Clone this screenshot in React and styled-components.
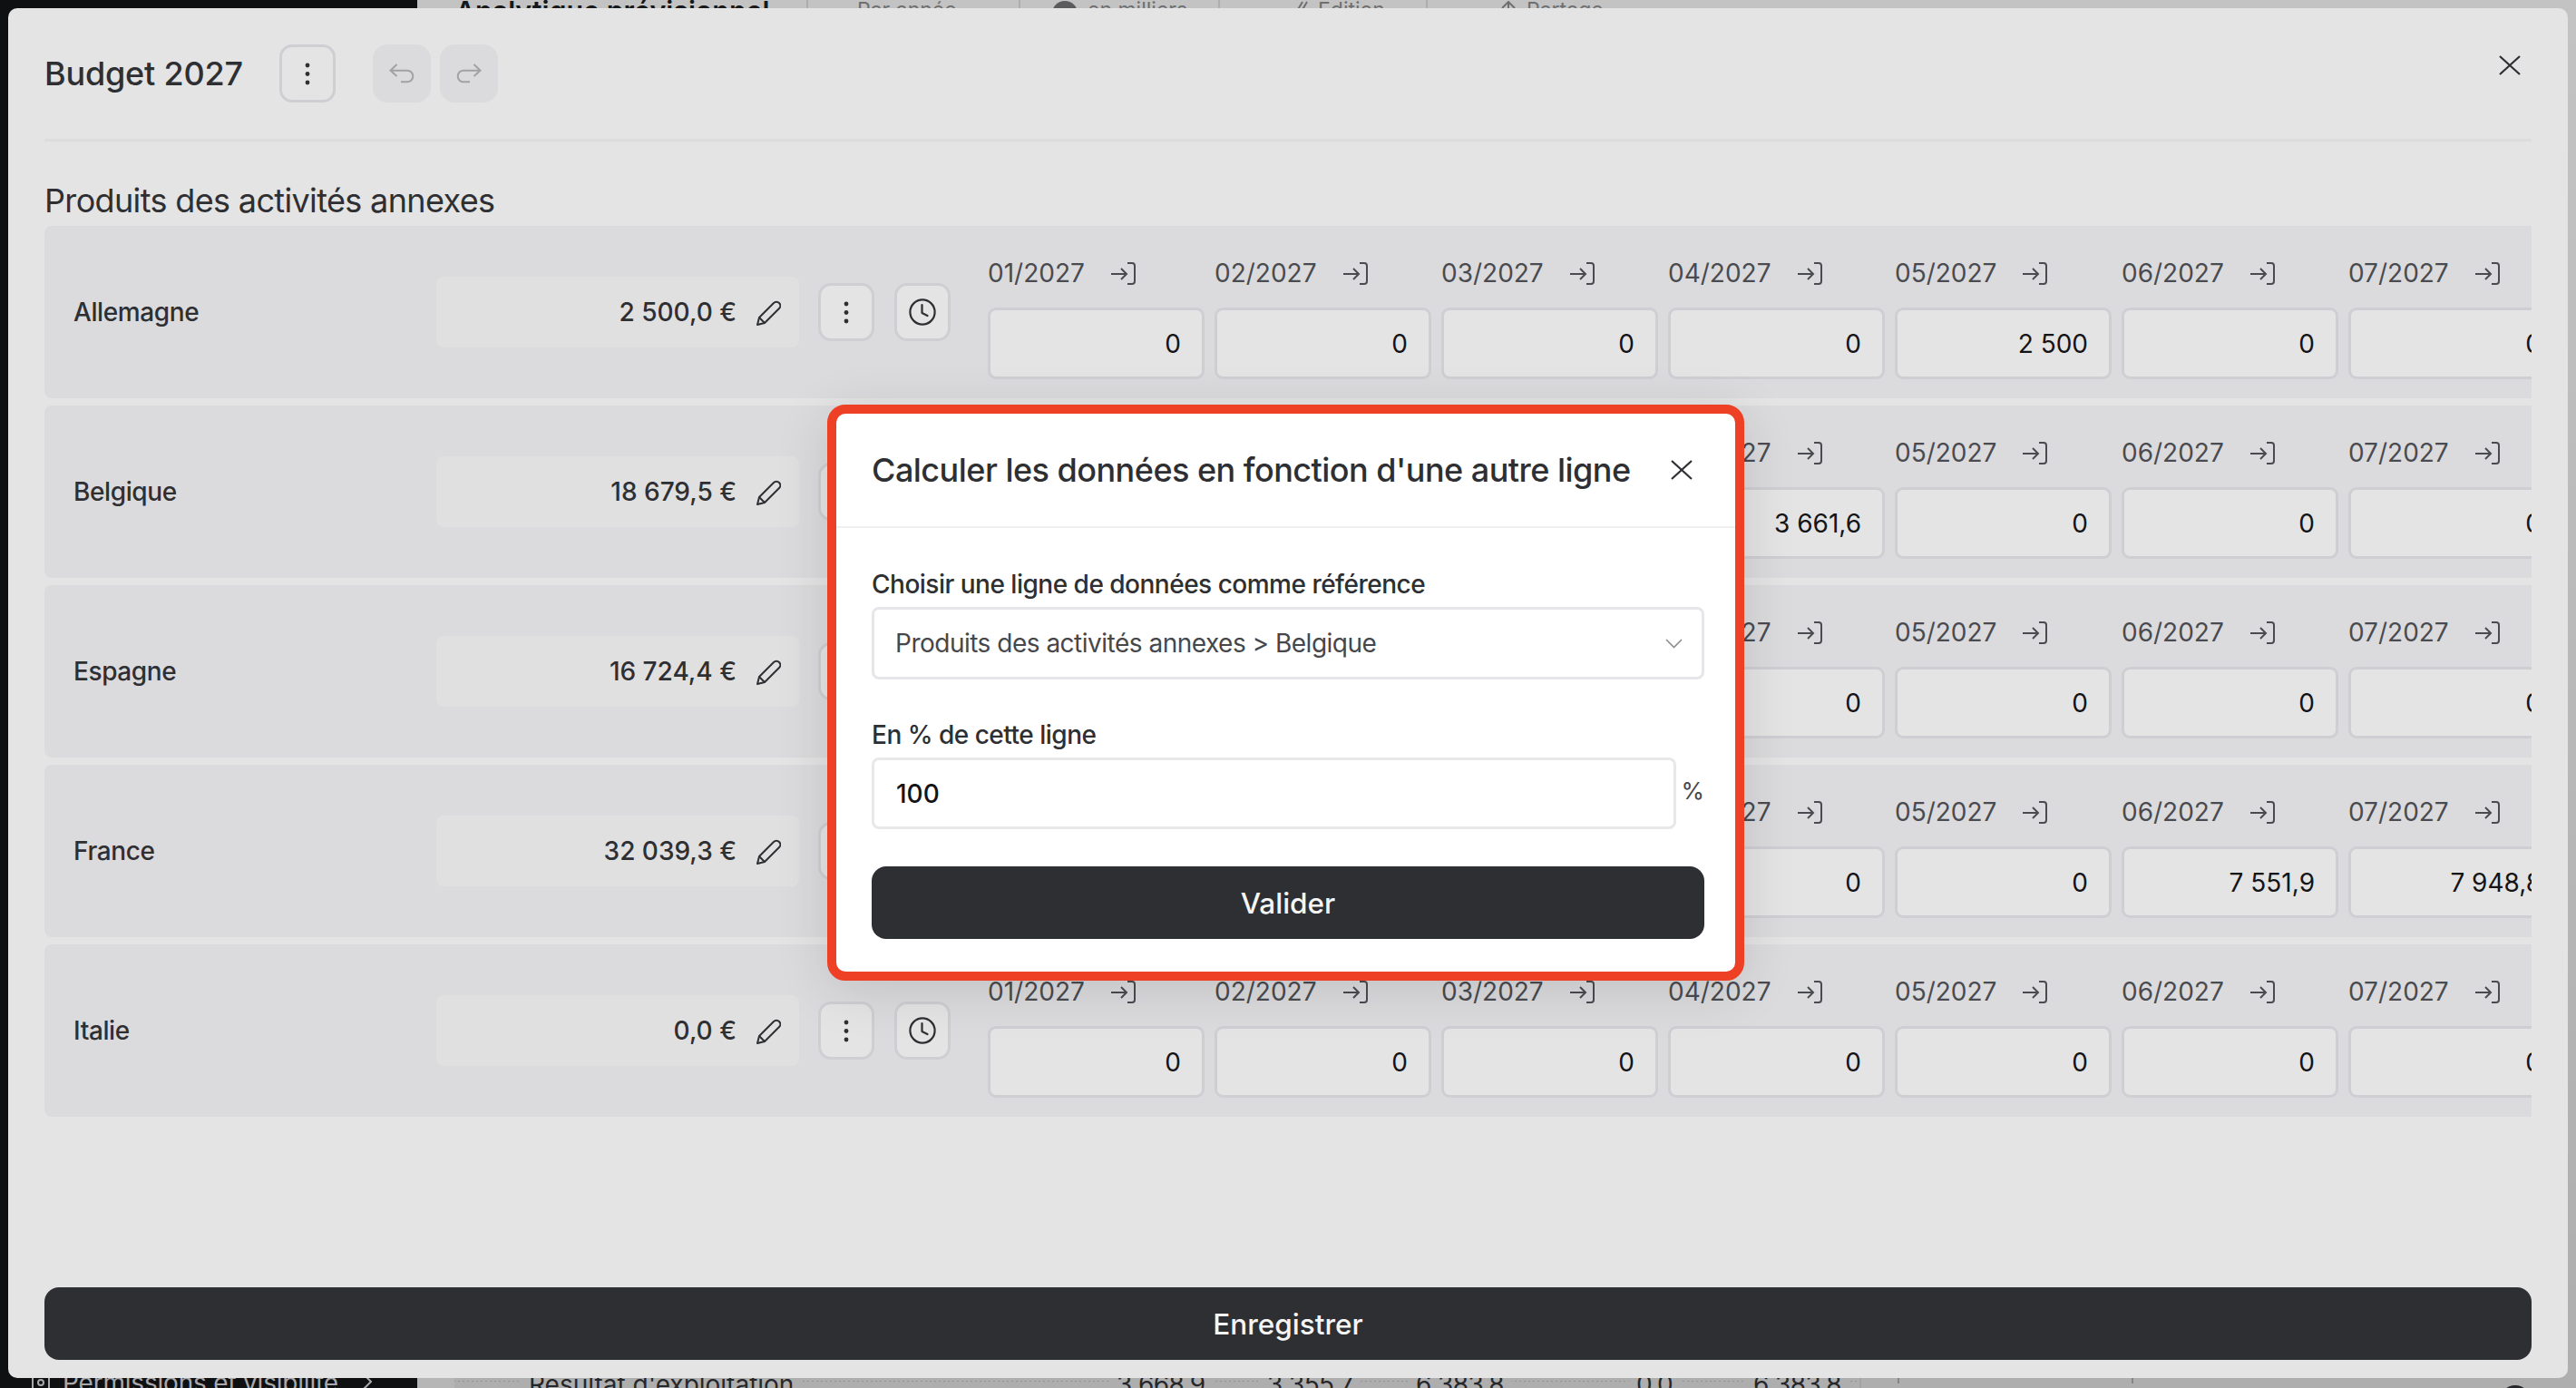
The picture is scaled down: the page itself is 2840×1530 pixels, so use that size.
import React from 'react';
import styled, { createGlobalStyle } from 'styled-components';

const GlobalStyle = createGlobalStyle`
  html, body {
    margin: 0;
    padding: 0;
    background: #0f1012;
  }
  * {
    box-sizing: border-box;
  }
`;

const Screen = styled.div`
  position: relative;
  width: 2840px;
  height: 1530px;
  overflow: hidden;
  display: flex;
  font-family: Inter, "Liberation Sans", sans-serif;
  color: #2e2f33;
`;

// what is left visible of the page behind the modal
const Sidebar = styled.aside`
  width: 460px;
  flex: none;
  background: #0f1012;
  color: #a9a9ab;
  font-size: 28px;
  display: flex;
  align-items: flex-end;
  padding: 0 0 0 35px;
  line-height: 30px;
  letter-spacing: -0.2px;
  margin-bottom: -9px;
  > svg {
    margin: 0 14px 4px 0;
  }
  > svg:last-child {
    margin: 0 0 6px 26px;
  }
`;

const Main = styled.main`
  flex: 1;
  display: flex;
  flex-direction: column;
  justify-content: space-between;
  background: linear-gradient(#c3c3c3, #aeaeae);
`;

const TopBar = styled.div`
  height: 9px;
  overflow: hidden;
  display: flex;
  padding-left: 42px;
`;

const PageTitle = styled.div`
  width: 387px;
  margin-top: -8px;
  font-size: 30.4px;
  font-weight: 600;
  line-height: 40px;
  color: #17181a;
  white-space: nowrap;
`;

const TopAction = styled.div`
  width: ${props => props.$width}px;
  height: 9px;
  display: flex;
  gap: 11px;
  border-left: 2px solid #adadad;
  padding-left: ${props => props.$pad}px;
  font-size: 23px;
  line-height: 30px;
  color: #6f6f70;
  white-space: nowrap;
  > span {
    margin-top: -4px;
  }
  > svg {
    flex: none;
    margin-top: 1px;
  }
`;

const BottomBar = styled.div`
  height: 12px;
  display: flex;
  font-size: 28px;
  line-height: 30px;
  color: #26272a;
  white-space: nowrap;
  background: repeating-linear-gradient(to right, #939393 0 2px, transparent 2px 5px) 0 4px / 100% 1px no-repeat;
`;

const BottomGutter = styled.div`
  width: 41px;
  flex: none;
  background: #b6b6b6;
`;

const BottomLabel = styled.div`
  width: 730px;
  flex: none;
  padding-left: 82px;
  margin-top: -7px;
  > span {
    background: #aeaeae;
    padding: 0 8px;
    margin-left: -8px;
  }
`;

const BottomFigure = styled.div`
  width: ${props => props.$width}px;
  flex: none;
  margin-top: -7px;
  letter-spacing: -0.6px;
  > span {
    background: #aeaeae;
    padding: 0 8px;
    margin-left: -8px;
  }
`;

const BottomRest = styled.div`
  flex: 1;
  display: flex;
  background: #aeaeae;
  border-left: 2px solid #a3a3a3;
`;

const Tick = styled.div`
  width: 2px;
  height: 7px;
  margin: 0 216px 0 40px;
  background: #858585;
`;

const Avatar = styled.div`
  width: 34px;
  height: 34px;
  margin: 9px 50px 0 auto;
  border-radius: 50%;
  background: #26272a;
`;

const Panel = styled.section`
  position: absolute;
  top: 9px;
  left: 9px;
  right: 9px;
  bottom: 11px;
  display: flex;
  flex-direction: column;
  padding: 0 40px 20px;
  background: #e4e4e4;
  border-radius: 10px;
`;

const PanelHeader = styled.header`
  height: 147px;
  flex: none;
  display: flex;
  align-items: center;
  border-bottom: 3px solid #dcdcdd;
`;

const PanelTitle = styled.h1`
  margin: 0 40px 0 0;
  font-size: 36px;
  font-weight: 500;
  letter-spacing: -0.2px;
`;

const IconButton = styled.button`
  width: 62px;
  height: 64px;
  flex: none;
  display: flex;
  align-items: center;
  justify-content: center;
  padding: 0;
  background: #e4e4e4;
  border: 3px solid #cfced3;
  border-radius: 14px;
  color: #2e2f33;
`;

const HistoryButton = styled.button`
  width: 64px;
  height: 64px;
  flex: none;
  display: flex;
  align-items: center;
  justify-content: center;
  padding: 0;
  margin-left: ${props => props.$first ? '41px' : '10px'};
  background: #dbdbdd;
  border: 0;
  border-radius: 16px;
  color: #a2a2a5;
`;

const CloseButton = styled.button`
  margin-left: auto;
  margin-right: 12px;
  margin-top: -18px;
  padding: 0;
  display: flex;
  background: none;
  border: 0;
  color: #2e2f33;
`;

const SectionTitle = styled.h2`
  margin: 43px 0 6px;
  font-size: 36px;
  font-weight: 400;
  line-height: 44px;
  letter-spacing: -0.65px;
`;

const Rows = styled.div`
  display: flex;
  flex-direction: column;
  gap: 8px;
`;

const Row = styled.div`
  height: 190px;
  display: flex;
  align-items: center;
  padding-left: 32px;
  background: #dbdbdd;
  border-radius: 8px 0 0 8px;
  overflow: hidden;
`;

const RowName = styled.div`
  width: 400px;
  flex: none;
  font-size: 28px;
  font-weight: 500;
  letter-spacing: -0.4px;
`;

const TotalBox = styled.div`
  width: 400px;
  height: 78px;
  flex: none;
  display: flex;
  align-items: center;
  justify-content: flex-end;
  gap: 22px;
  padding-right: 20px;
  margin-right: 21px;
  background: #e0e0e0;
  border-radius: 8px;
  font-size: 28px;
  font-weight: 500;
  > svg {
    margin-top: 2px;
  }
`;

const Spacer = styled.div`
  width: 22px;
  flex: none;
`;

const Months = styled.div`
  display: flex;
  gap: 11px;
  margin-left: 41px;
  align-self: flex-start;
  padding-top: 34px;
`;

const Month = styled.div`
  width: 239px;
  flex: none;
`;

const MonthHead = styled.div`
  height: 36px;
  display: flex;
  align-items: center;
  margin-bottom: 20px;
  font-size: 28px;
  color: #4a4b50;
  > svg {
    margin-left: 29px;
  }
`;

const Cell = styled.div`
  height: 79px;
  display: flex;
  align-items: center;
  justify-content: flex-end;
  padding-right: 23px;
  background: #e4e4e4;
  border: 3px solid #cfced3;
  border-radius: 9px;
  font-size: 28px;
  color: #141416;
  white-space: nowrap;
`;

const SaveButton = styled.button`
  height: 80px;
  flex: none;
  margin-top: auto;
  background: #2e2f33;
  border: 0;
  border-radius: 16px;
  color: #f5f5f5;
  font-family: inherit;
  font-size: 31.5px;
  font-weight: 500;
`;

const Dialog = styled.div`
  position: absolute;
  top: 446px;
  left: 912px;
  width: 1011px;
  height: 635px;
  background: #fff;
  border: 10px solid #ee4025;
  border-radius: 20px;
  box-shadow: 0 10px 60px rgba(0, 0, 0, 0.12);
`;

const DialogHeader = styled.div`
  height: 126px;
  display: flex;
  align-items: center;
  padding: 0 20px 0 39px;
  border-bottom: 2px solid #f0f0f0;
`;

const DialogTitle = styled.h3`
  margin: 0;
  font-size: 36px;
  font-weight: 500;
  color: #2e2f33;
  letter-spacing: -0.52px;
  white-space: nowrap;
`;

const DialogClose = styled(CloseButton)`
  margin: 0 27px 0 auto;
`;

const DialogBody = styled.div`
  padding: 47px 34px 0 39px;
`;

const FieldLabel = styled.div`
  height: 30px;
  margin-top: ${props => props.$gap || 0}px;
  margin-bottom: 10px;
  font-size: 28px;
  font-weight: 500;
  line-height: 30px;
  letter-spacing: -0.5px;
  color: #2e2f33;
`;

const Select = styled.div`
  height: 80px;
  display: flex;
  align-items: center;
  justify-content: space-between;
  padding: 0 21px 0 23px;
  background: #fff;
  border: 3px solid #e6e6ea;
  border-radius: 8px;
  font-size: 28px;
  letter-spacing: -0.5px;
  color: #46474b;
`;

const InputRow = styled.div`
  display: flex;
  align-items: center;
  justify-content: space-between;
`;

const Input = styled.div`
  width: 887px;
  height: 79px;
  display: flex;
  align-items: center;
  padding-left: 24px;
  background: #fff;
  border: 3px solid #e8e8e8;
  border-radius: 8px;
  font-size: 28px;
  font-weight: 500;
  color: #141416;
`;

const Percent = styled.span`
  font-size: 26px;
  margin-top: -6px;
  color: #46474b;
`;

const ValidateButton = styled(SaveButton)`
  display: block;
  width: 100%;
  margin-top: 41px;
`;

const Dots = () => (
  <svg width="6" height="25" viewBox="0 0 6 25" fill="currentColor">
    <circle cx="3" cy="3" r="2.4" />
    <circle cx="3" cy="12.5" r="2.4" />
    <circle cx="3" cy="22" r="2.4" />
  </svg>
);

const Undo = ({ flip }) => (
  <svg width="28" height="22" viewBox="-1 -1 28 22" fill="none" stroke="currentColor" strokeWidth="2" style={flip ? { transform: 'scaleX(-1)' } : undefined}>
    <path d="M7.5 0 0.5 6.7 7.5 13" />
    <path d="M0.5 6.7H19a6.3 6.3 0 0 1 0 12.6h-7" />
  </svg>
);

const Cross = ({ size = 24 }) => (
  <svg width={size} height={size - 2} viewBox="0 0 24 22" fill="none" stroke="currentColor" strokeWidth="2.2">
    <path d="M1 1 23 21M23 1 1 21" />
  </svg>
);

const Pencil = () => (
  <svg width="27" height="28" viewBox="0 0 27 28" fill="none" stroke="currentColor" strokeWidth="2" strokeLinejoin="round">
    <path d="M1 27 3 19 19 3a4 4 0 0 1 6 6L9 25Z" />
    <path d="M3 19l6 6" />
  </svg>
);

const Clock = () => (
  <svg width="30" height="30" viewBox="0 0 30 30" fill="none" stroke="currentColor" strokeWidth="2.2" strokeLinecap="round" strokeLinejoin="round">
    <circle cx="15" cy="15" r="13.6" />
    <path d="M14.5 7v9l6 3" />
  </svg>
);

const Apply = () => (
  <svg width="27" height="25" viewBox="0 0 27 25" fill="none" stroke="currentColor" strokeWidth="2">
    <path d="M0 13h17M11 7l6 6-6 6" />
    <path d="M18 1h5a3 3 0 0 1 3 3v17a3 3 0 0 1-3 3h-5" />
  </svg>
);

const Chevron = () => (
  <svg width="19" height="11" viewBox="0 0 19 11" fill="none" stroke="#8e8e92" strokeWidth="1.6">
    <path d="M1 1l8.5 8.5L18 1" />
  </svg>
);

const SmallChevron = () => (
  <svg width="11" height="20" viewBox="0 0 11 20" fill="none" stroke="#a9a9ab" strokeWidth="2">
    <path d="M1 1l9 9-9 9" />
  </svg>
);

const SidebarIcon = () => (
  <svg width="20" height="22" viewBox="0 0 20 22" fill="none" stroke="#a9a9ab" strokeWidth="2">
    <rect x="1" y="1" width="18" height="20" rx="4" />
    <circle cx="10" cy="11" r="3" />
  </svg>
);

const Badge = () => (
  <svg width="28" height="28" viewBox="0 0 28 28">
    <circle cx="14" cy="14" r="14" fill="#5b5b5d" />
  </svg>
);

const SmallPen = () => (
  <svg width="20" height="24" viewBox="0 0 20 24" fill="none" stroke="#6f6f70" strokeWidth="2">
    <path d="M14 1 1 23M19 1 6 23" />
  </svg>
);

const UpArrow = () => (
  <svg width="18" height="24" viewBox="0 0 18 24" fill="none" stroke="#6f6f70" strokeWidth="2">
    <path d="M9 1v23M2 8l7-7 7 7" />
  </svg>
);

const months = ['01/2027', '02/2027', '03/2027', '04/2027', '05/2027', '06/2027', '07/2027'];

const rows = [
  { name: 'Allemagne', total: '2 500,0 €', values: ['0', '0', '0', '0', '2 500', '0', '0'] },
  { name: 'Belgique', total: '18 679,5 €', values: ['0', '0', '0', '3 661,6', '0', '0', '0'] },
  { name: 'Espagne', total: '16 724,4 €', values: ['0', '0', '0', '0', '0', '0', '0'] },
  { name: 'France', total: '32 039,3 €', values: ['0', '0', '0', '0', '0', '7 551,9', '7 948,8'] },
  { name: 'Italie', total: '0,0 €', values: ['0', '0', '0', '0', '0', '0', '0'] },
];

const App = () => (
  <Screen>
    <GlobalStyle />
    <Sidebar>
      <SidebarIcon />
      <span>Permissions et visibilité</span>
      <SmallChevron />
    </Sidebar>
    <Main>
      <TopBar>
        <PageTitle>Analytique prévisionnel</PageTitle>
        <TopAction $width={234} $pad={54}><span>Par année</span></TopAction>
        <TopAction $width={220} $pad={35}><Badge /><span>en milliers</span></TopAction>
        <TopAction $width={229} $pad={77}><SmallPen /><span>Edition</span></TopAction>
        <TopAction $width={243} $pad={80}><UpArrow /><span>Partage</span></TopAction>
      </TopBar>
      <BottomBar>
        <BottomGutter />
        <BottomLabel><span>Résultat d'exploitation</span></BottomLabel>
        <BottomFigure $width={166}><span>3 668,9</span></BottomFigure>
        <BottomFigure $width={164}><span>3 355,7</span></BottomFigure>
        <BottomFigure $width={243}><span>6 383,8</span></BottomFigure>
        <BottomFigure $width={129}><span>0,0</span></BottomFigure>
        <BottomFigure $width={117}><span>6 383,8</span></BottomFigure>
        <BottomRest>
          <Tick />
          <Tick />
          <Avatar />
        </BottomRest>
      </BottomBar>
    </Main>
    <Panel>
      <PanelHeader>
        <PanelTitle>Budget 2027</PanelTitle>
        <IconButton><Dots /></IconButton>
        <HistoryButton $first><Undo /></HistoryButton>
        <HistoryButton><Undo flip /></HistoryButton>
        <CloseButton><Cross /></CloseButton>
      </PanelHeader>
      <SectionTitle>Produits des activités annexes</SectionTitle>
      <Rows>
        {rows.map(row => (
          <Row key={row.name}>
            <RowName>{row.name}</RowName>
            <TotalBox>
              {row.total}
              <Pencil />
            </TotalBox>
            <IconButton><Dots /></IconButton>
            <Spacer />
            <IconButton><Clock /></IconButton>
            <Months>
              {months.map((month, i) => (
                <Month key={month}>
                  <MonthHead>
                    {month}
                    <Apply />
                  </MonthHead>
                  <Cell>{row.values[i]}</Cell>
                </Month>
              ))}
            </Months>
          </Row>
        ))}
      </Rows>
      <SaveButton>Enregistrer</SaveButton>
    </Panel>
    <Dialog>
      <DialogHeader>
        <DialogTitle>Calculer les données en fonction d'une autre ligne</DialogTitle>
        <DialogClose><Cross /></DialogClose>
      </DialogHeader>
      <DialogBody>
        <FieldLabel>Choisir une ligne de données comme référence</FieldLabel>
        <Select>
          Produits des activités annexes &gt; Belgique
          <Chevron />
        </Select>
        <FieldLabel $gap={46}>En % de cette ligne</FieldLabel>
        <InputRow>
          <Input>100</Input>
          <Percent>%</Percent>
        </InputRow>
        <ValidateButton>Valider</ValidateButton>
      </DialogBody>
    </Dialog>
  </Screen>
);

export default App;
